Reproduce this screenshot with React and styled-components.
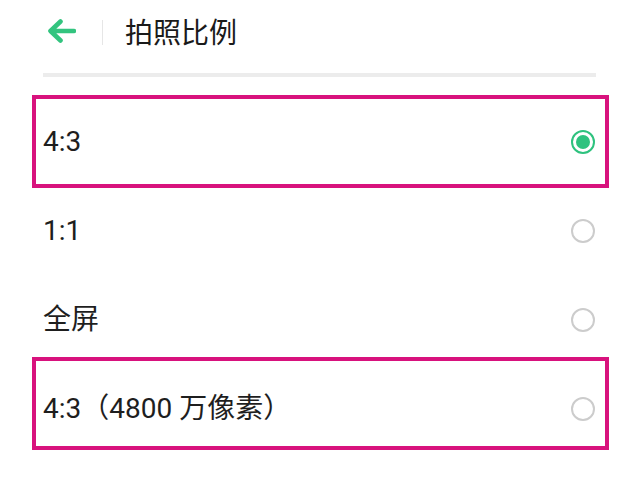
import styled, { createGlobalStyle } from 'styled-components';

const GlobalStyle = createGlobalStyle`
  html, body {
    margin: 0;
    padding: 0;
    background: #ffffff;
  }
  body {
    font-family: Roboto, "Noto Sans CJK SC", sans-serif;
    color: #1e1e1e;
  }
`;

const Page = styled.div`
  width: 640px;
  height: 488px;
  overflow: hidden;
  background: #ffffff;
`;

const Header = styled.header`
  height: 62px;
  display: flex;
  align-items: center;
  padding-left: 47px;
`;

const BackButton = styled.button`
  border: 0;
  padding: 0;
  background: none;
  display: flex;
  align-items: center;
  width: 29px;
  height: 24px;
`;

const Divider = styled.span`
  width: 1px;
  height: 25px;
  background: #e6e6e6;
  margin: 2px 22px 0 26px;
`;

const Title = styled.h1`
  margin: 0;
  font-size: 28px;
  font-weight: 400;
  color: #1a1a1a;
`;

const Separator = styled.div`
  height: 4px;
  margin: 11px 44px 0 43px;
  background: #ececec;
`;

const List = styled.ul`
  list-style: none;
  margin: 20px 0 0;
  padding: 0 45px 0 43px;
`;

const Row = styled.li`
  position: relative;
  height: 89px;
  display: flex;
  align-items: center;
  justify-content: space-between;
  font-size: 28px;

  &::after {
    content: '';
    display: ${(p) => (p.$marked ? 'block' : 'none')};
    position: absolute;
    top: ${(p) => p.$boxTop ?? -2}px;
    bottom: ${(p) => p.$boxBottom ?? -2}px;
    left: -11px;
    right: -14px;
    border: 4px solid #d8127d;
    pointer-events: none;
  }
`;

const Label = styled.span`
  line-height: 1;
`;

const Radio = styled.span`
  width: 24px;
  height: 24px;
  box-sizing: border-box;
  border-radius: 50%;
  border: 2px solid ${(p) => (p.$checked ? '#2ec27e' : '#cccccc')};
  display: flex;
  align-items: center;
  justify-content: center;

  &::before {
    content: '';
    display: ${(p) => (p.$checked ? 'block' : 'none')};
    width: 14px;
    height: 14px;
    border-radius: 50%;
    background: #2ec27e;
  }
`;

const options = [
  { label: '4:3', checked: true, marked: true },
  { label: '1:1' },
  { label: '全屏' },
  { label: '4:3（4800 万像素）', marked: true, boxTop: -7, boxBottom: 3 },
];

function App() {
  return (
    <Page>
      <GlobalStyle />
      <Header>
        <BackButton aria-label="返回">
          <svg width="29" height="24" viewBox="0 0 29 24" fill="none">
            <path
              d="M27 12H4M13.5 2.5L3.5 12l10 9.5"
              stroke="#33c47f"
              strokeWidth="4.6"
              strokeLinecap="round"
              strokeLinejoin="round"
            />
          </svg>
        </BackButton>
        <Divider />
        <Title>拍照比例</Title>
      </Header>
      <Separator />
      <List>
        {options.map((o) => (
          <Row
            key={o.label}
            $marked={o.marked}
            $boxTop={o.boxTop}
            $boxBottom={o.boxBottom}
          >
            <Label>{o.label}</Label>
            <Radio $checked={o.checked} />
          </Row>
        ))}
      </List>
    </Page>
  );
}

export default App;
